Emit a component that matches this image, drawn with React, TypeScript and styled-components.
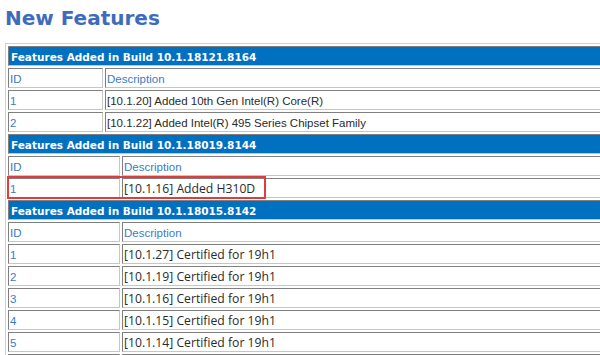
import { Fragment } from "react";
import styled, { createGlobalStyle } from "styled-components";

const GlobalStyle = createGlobalStyle`
    html, body {
        margin: 0;
        background: #ffffff;
        overflow: hidden;
    }
`
const PageDiv = styled.div`
    width: 600px;
    height: 355px;
    padding-left: 5px;
    box-sizing: border-box;
    overflow: hidden;
`
const Title = styled.h1`
    margin: 0;
    padding-top: 6px;
    height: 24px;
    line-height: 24px;
    font-family: "DejaVu Sans", Verdana, sans-serif;
    font-size: 20px;
    font-weight: bold;
    color: #3e6bbd;
    box-sizing: content-box;
`
const Sheet = styled.div`
    margin-top: 13px;
    width: 640px;
    padding: 2px;
    display: flex;
    flex-direction: column;
    gap: 2px;
    border: 1px solid;
    border-color: #d0d0d0 #8a8a8a #8a8a8a #d0d0d0;
`
const Row = styled.div<{ $idWidth?: number }>`
    position: relative;
    display: grid;
    grid-template-columns: ${p => (p.$idWidth ? `${p.$idWidth}px 1fr` : "1fr")};
    gap: 2px;
`
const Cell = styled.div`
    height: 20px;
    box-sizing: border-box;
    padding: 1px 2px 0 2px;
    border: 1px solid;
    border-color: #7f7f7f #c6c6c6 #c6c6c6 #7f7f7f;
    display: flex;
    align-items: center;
    white-space: nowrap;
    overflow: hidden;
`
const BuildCell = styled(Cell)`
    background: #0070c0;
    color: #ffffff;
    font-family: "DejaVu Sans", Verdana, sans-serif;
    font-size: 10.5px;
    font-weight: bold;
    padding-left: 2px;
`
const LabelCell = styled(Cell)`
    color: #3b7bc4;
    font-family: "Liberation Sans", Arial, sans-serif;
    font-size: 11.5px;
    padding-left: 1px;
`
const TextCell = styled(Cell)<{ $face: "arial" | "segoe" }>`
    color: #2b2b2b;
    font-family: ${p => (p.$face === "arial" ? `"Liberation Sans", Arial, sans-serif` : `"Open Sans", "Noto Sans", sans-serif`)};
    font-size: ${p => (p.$face === "arial" ? "11.5px" : "12.2px")};
    padding-left: 1px;
`
// red annotation box drawn over a row
const Highlight = styled.div`
    position: absolute;
    top: -2px;
    left: -1px;
    width: 259px;
    height: 23px;
    border: 2px solid #e23b3b;
    box-sizing: border-box;
    pointer-events: none;
`

type Feature = { id: string; text: string; marked?: boolean }
type Build = { build: string; idWidth: number; face: "arial" | "segoe"; rows: Feature[] }

const builds: Build[] = [
    {
        build: "10.1.18121.8164",
        idWidth: 95,
        face: "arial",
        rows: [
            { id: "1", text: "[10.1.20] Added 10th Gen Intel(R) Core(R)" },
            { id: "2", text: "[10.1.22] Added Intel(R) 495 Series Chipset Family" },
        ],
    },
    {
        build: "10.1.18019.8144",
        idWidth: 112,
        face: "segoe",
        rows: [{ id: "1", text: "[10.1.16] Added H310D", marked: true }],
    },
    {
        build: "10.1.18015.8142",
        idWidth: 112,
        face: "segoe",
        rows: [
            { id: "1", text: "[10.1.27] Certified for 19h1" },
            { id: "2", text: "[10.1.19] Certified for 19h1" },
            { id: "3", text: "[10.1.16] Certified for 19h1" },
            { id: "4", text: "[10.1.15] Certified for 19h1" },
            { id: "5", text: "[10.1.14] Certified for 19h1" },
        ],
    },
]

export default function App() {
    return (
        <PageDiv>
            <GlobalStyle />
            <Title>New Features</Title>
            <Sheet>
                {builds.map(b => (
                    <Fragment key={b.build}>
                        <Row>
                            <BuildCell>Features Added in Build {b.build}</BuildCell>
                        </Row>
                        <Row $idWidth={b.idWidth}>
                            <LabelCell>ID</LabelCell>
                            <LabelCell>Description</LabelCell>
                        </Row>
                        {b.rows.map(r => (
                            <Row key={r.id} $idWidth={b.idWidth}>
                                <LabelCell>{r.id}</LabelCell>
                                <TextCell $face={b.face}>{r.text}</TextCell>
                                {r.marked && <Highlight />}
                            </Row>
                        ))}
                    </Fragment>
                ))}
                {/* next row starts at the bottom edge; only its top border shows */}
                <Row $idWidth={112}>
                    <LabelCell />
                    <TextCell $face="segoe" />
                </Row>
            </Sheet>
        </PageDiv>
    )
}
